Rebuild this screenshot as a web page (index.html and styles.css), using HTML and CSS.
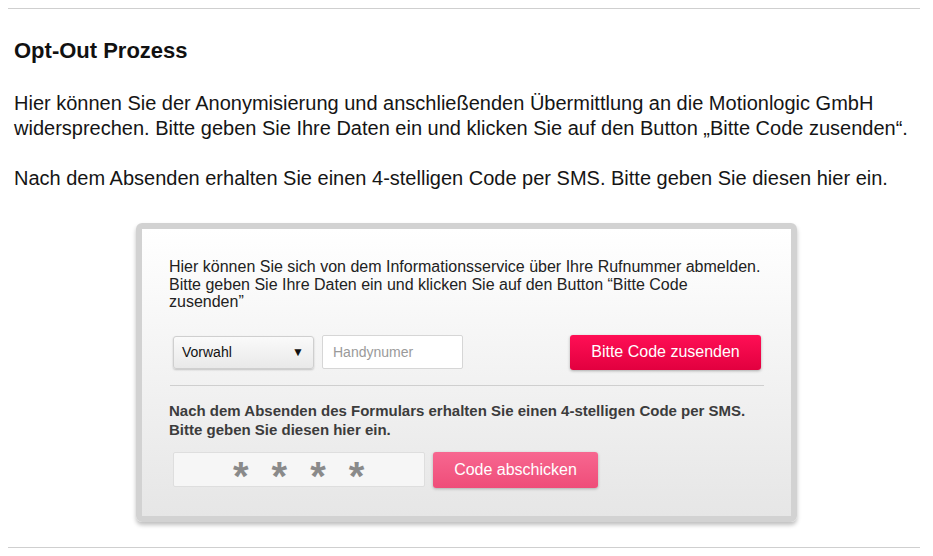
FILE: index.html
```html
<!DOCTYPE html>
<html lang="de">
<head>
<meta charset="utf-8">
<title>Opt-Out Prozess</title>
<link rel="stylesheet" href="styles.css">
</head>
<body>
<div class="page">
  <div class="rule"></div>
  <div class="content">
    <h2 class="title">Opt-Out Prozess</h2>
    <p class="lead">Hier können Sie der Anonymisierung und anschließenden Übermittlung an die Motionlogic GmbH widersprechen. Bitte geben Sie Ihre Daten ein und klicken Sie auf den Button „Bitte Code zusenden“.</p>
    <p class="lead">Nach dem Absenden erhalten Sie einen 4-stelligen Code per SMS. Bitte geben Sie diesen hier ein.</p>
  </div>
  <div class="box-wrap">
    <div class="box">
      <p class="intro">Hier können Sie sich von dem Informationsservice über Ihre Rufnummer abmelden. Bitte geben Sie Ihre Daten ein und klicken Sie auf den Button “Bitte Code zusenden”</p>
      <div class="row">
        <div class="select"><span>Vorwahl</span><span class="arrow">▼</span></div>
        <div class="input placeholder">Handynumer</div>
        <div class="btn btn-primary">Bitte Code zusenden</div>
      </div>
      <div class="divider"></div>
      <p class="note">Nach dem Absenden des Formulars erhalten Sie einen 4-stelligen Code per SMS.<br>Bitte geben Sie diesen hier ein.</p>
      <div class="row row-code">
        <div class="code-input"><span>*</span><span>*</span><span>*</span><span>*</span></div>
        <div class="btn btn-light">Code abschicken</div>
      </div>
    </div>
  </div>
  <div class="rule rule-bottom"></div>
</div>
</body>
</html>
```

FILE: styles.css
```css
html, body {
  margin: 0;
  padding: 0;
  background: #fff;
}
body {
  font-family: "Liberation Sans", Arial, sans-serif;
  color: #111;
}
.page {
  padding: 8px 13px 0 8px;
}
.rule {
  height: 1px;
  background: #cfcfcf;
}
.content {
  padding: 0 6px;
}
.title {
  margin: 29px 0 0;
  font-size: 22px;
  line-height: 26px;
  font-weight: bold;
  color: #111;
}
.lead {
  margin: 27px 0 0;
  font-size: 20px;
  line-height: 25px;
  color: #151515;
}
.lead + .lead {
  margin-top: 25px;
}
.box-wrap {
  display: flex;
  justify-content: center;
  padding: 32px 0 0 5px;
}
.box {
  box-sizing: border-box;
  width: 661px;
  border: 6px solid #d2d2d2;
  border-radius: 6px;
  background: linear-gradient(#ffffff, #e6e6e6);
  box-shadow: 0 3px 4px rgba(0,0,0,0.25);
  padding: 29px 27px 28px;
}
.intro {
  margin: 0;
  font-size: 16px;
  line-height: 17.5px;
  color: #222;
}
.row {
  display: flex;
  align-items: center;
  margin-top: 24px;
  padding-left: 4px;
}
.select {
  box-sizing: border-box;
  width: 141px;
  height: 33px;
  border: 1px solid #cfcfcf;
  border-radius: 3px;
  background: linear-gradient(#fafafa, #e9e9e9);
  box-shadow: 0 1px 2px rgba(0,0,0,0.2);
  display: flex;
  align-items: center;
  justify-content: space-between;
  padding: 0 9px 0 8px;
  font-size: 14px;
  color: #111;
}
.arrow {
  font-size: 12px;
}
.input {
  box-sizing: border-box;
  width: 141px;
  height: 34px;
  margin-left: 8px;
  border: 1px solid #d6d6d6;
  border-radius: 2px;
  background: #fff;
  display: flex;
  align-items: center;
  padding-left: 10px;
  font-size: 14px;
  color: #9a9a9a;
}
.btn {
  box-sizing: border-box;
  height: 35px;
  border-radius: 3px;
  display: flex;
  align-items: center;
  justify-content: center;
  color: #fff;
  font-size: 16px;
}
.btn-primary {
  margin-left: auto;
  margin-right: 3px;
  width: 191px;
  background: linear-gradient(#ff0f55, #e2003f);
  box-shadow: 0 1px 3px rgba(0,0,0,0.3);
}
.divider {
  height: 1px;
  background: #cfcfcf;
  margin: 15px 0 0 1px;
}
.note {
  margin: 15px 0 0;
  font-size: 15px;
  line-height: 19px;
  font-weight: bold;
  color: #3c3c3c;
}
.row-code {
  margin-top: 13px;
}
.code-input {
  box-sizing: border-box;
  width: 252px;
  height: 35px;
  border: 1px solid #dedede;
  border-radius: 2px;
  background: #f6f6f6;
  display: flex;
  align-items: center;
  gap: 23px;
  padding: 13px 0 0 59px;
  font-size: 40px;
  font-weight: bold;
  color: #8a8a8a;
}
.btn-light {
  margin-left: 8px;
  width: 165px;
  height: 36px;
  background: linear-gradient(#f76790, #ef4d79);
  box-shadow: 0 1px 3px rgba(0,0,0,0.25);
}
.rule-bottom {
  margin-top: 25px;
}
```
